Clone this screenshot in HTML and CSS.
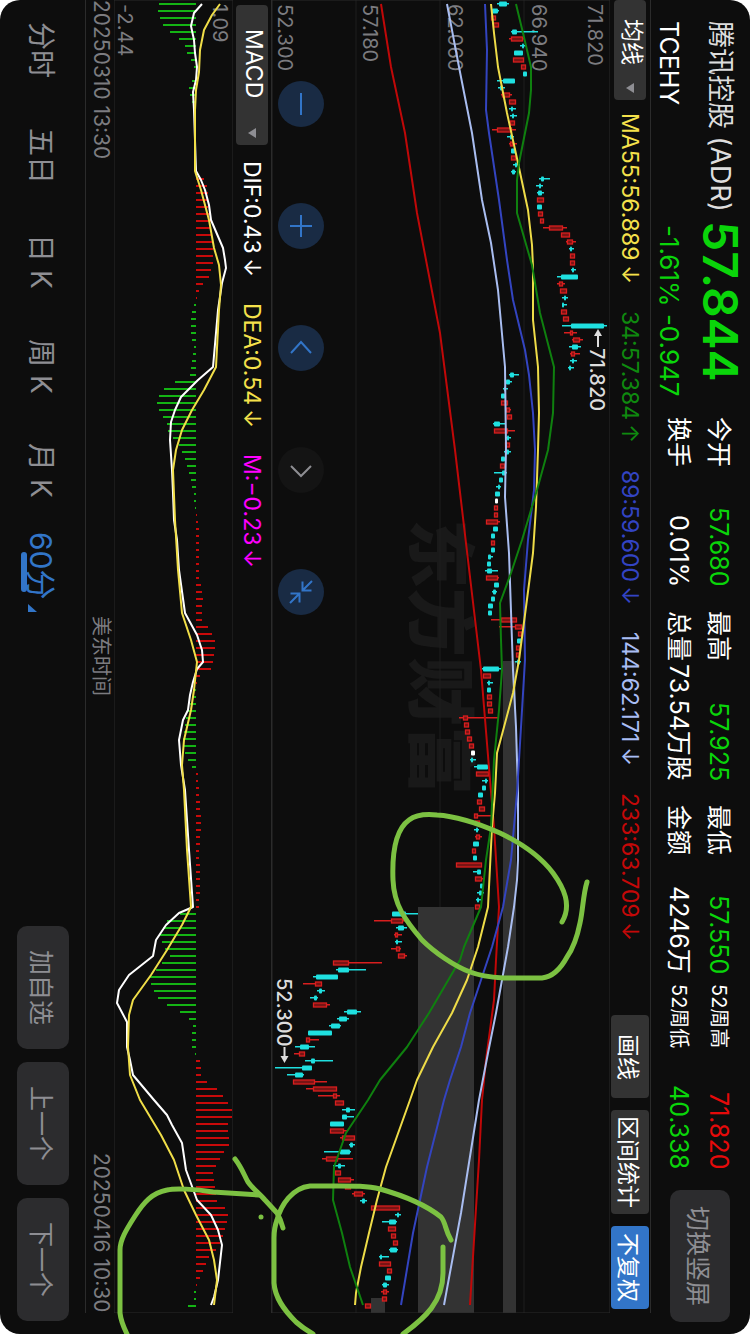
FILE: index.html
```
<!DOCTYPE html>
<html lang="zh">
<head>
  <meta charset="UTF-8">
  <meta name="viewport" content="width=device-width, initial-scale=1">
  <title>腾讯控股 (ADR)</title>
  <link rel="stylesheet" href="styles.css">
</head>
<body>

<div class="screen">
  <header class="quote">
    <div class="name">
      <h1>腾讯控股 (ADR)</h1>
      <div>TCEHY</div>
    </div>
    <div class="price">
      <strong>57.844</strong>
      <div>-1.61% -0.947</div>
    </div>
    <dl class="stats">
      <div><dt>今开</dt><dd class="down">57.680</dd></div>
      <div><dt>最高</dt><dd class="down">57.925</dd></div>
      <div><dt>最低</dt><dd class="down">57.550</dd></div>
      <div><dt class="small">52周高</dt><dd class="up">71.820</dd></div>
      <div><dt>换手</dt><dd>0.01%</dd></div>
      <div><dt>总量</dt><dd>73.54万股</dd></div>
      <div><dt>金额</dt><dd>4246万</dd></div>
      <div><dt class="small">52周低</dt><dd class="down">40.338</dd></div>
    </dl>
    <button class="soft rotate">切换竖屏</button>
  </header>

  <main class="board">
    <div class="legend averages">
      <div class="picker">
        <select aria-label="主图指标"><option>均线</option></select>
      </div>
      <span class="ma55">MA55:56.889<i>↓</i></span>
      <span class="ma34">34:57.384<i>↑</i></span>
      <span class="ma89">89:59.600<i>↓</i></span>
      <span class="ma144">144:62.171<i>↓</i></span>
      <span class="ma233">233:63.709<i>↓</i></span>
      <div class="tools">
        <button>画线</button>
        <button>区间统计</button>
        <button class="on">不复权</button>
      </div>
    </div>

    <div class="plot">
      <svg viewBox="0 0 338 1313"><g id="kline" transform="translate(338 0) rotate(90)"></g></svg>
      <div class="controls">
        <button aria-label="缩小"><svg viewBox="0 0 46 46"><path d="M23 12V34"/></svg></button>
        <button aria-label="放大"><svg viewBox="0 0 46 46"><path d="M12 23H34M23 12V34"/></svg></button>
        <button aria-label="向左"><svg viewBox="0 0 46 46"><path d="M13 28L23 17L33 28"/></svg></button>
        <button aria-label="向右" class="off"><svg viewBox="0 0 46 46"><path d="M13 19L23 29L33 19"/></svg></button>
        <button aria-label="退出全屏"><svg viewBox="0 0 46 46"><path d="M34 12L24.500 21.500M24.500 12.500V21.500H33.500M12 34L21.500 24.500M21.500 33.500V24.500H12.500"/></svg></button>
      </div>
    </div>

    <div class="legend macd">
      <div class="picker wide">
        <select aria-label="副图指标"><option>MACD</option></select>
      </div>
      <span class="dif">DIF:0.43<i>↓</i></span>
      <span class="dea">DEA:0.54<i>↓</i></span>
      <span class="hist">M:−0.23<i>↓</i></span>
    </div>

    <div class="plot">
      <svg viewBox="0 0 119 1313"><g id="macd" transform="translate(119 0) rotate(90)"></g></svg>
    </div>

    <div class="dates">
      <time>20250310 13:30</time>
      <span>美东时间</span>
      <time>20250416 10:30</time>
    </div>
  </main>

  <footer class="bar">
    <nav class="tabs">
      <a href="#">分时</a>
      <a href="#">五日</a>
      <a href="#">日 K</a>
      <a href="#">周 K</a>
      <a href="#">月 K</a>
      <a href="#" class="active">60分</a>
    </nav>
    <div class="actions">
      <button class="soft">加自选</button>
      <button class="soft">上一个</button>
      <button class="soft">下一个</button>
    </div>
  </footer>

  <svg class="ink" viewBox="0 0 750 1334">
    <g transform="translate(750 0) rotate(90)">
      <path d="M882 163C895 167 910 167 923 170C938 173 950 178 957 183C970 190 977 198 978 208V247C977 262 975 272 972 280C966 296 952 316 940 328C920 345 905 356 880 357C855 358 830 355 820 341C814 333 814 322 815 313C816 295 822 275 833 250C845 225 857 209 873 197C888 186 905 178 922 188"/>
      <path d="M1240 299C1230 305 1223 304 1217 309C1205 324 1196 345 1189 370C1185 385 1186 400 1186 440C1188 458 1205 469 1220 473Q1228 476 1238 476H1283C1298 475 1310 466 1322 454Q1329 446 1334 437M1334 347C1318 325 1302 307 1273 307H1247"/>
      <path d="M1195 491L1192 537C1189 555 1188 575 1190 583C1193 598 1202 606 1216 615C1230 624 1240 630 1250 630H1313C1322 629 1328 626 1334 623"/>
      <path d="M1159 515C1168 508 1175 506 1182 502C1189 497 1193 491 1200 485L1213 473Q1220 469 1228 467"/>
      <circle cx="1217" cy="489" r="2.500"/>
    </g>
  </svg>
</div>

<script src="chart.js"></script>
</body>
</html>
```
FILE: styles.css
```
* {
  box-sizing: border-box;
}
body {
  margin: 0;
  background: #fff;
  color: #fff;
  font-family: Inter, "Noto Sans CJK SC", sans-serif;
  font-size: 24px;
}
/* landscape page on a portrait window: lines run down, rows stack right to left */
.screen {
  writing-mode: vertical-rl;
  text-orientation: sideways;
  position: relative;
  width: 100%;
  height: 100vh;
  overflow: hidden;
  background: #0d0d0d;
  border-radius: 20px;
}
button, select {
  margin: 0;
  border: none;
  color: inherit;
  font: inherit;
  writing-mode: inherit;
  text-orientation: inherit;
  cursor: pointer;
}
svg {
  writing-mode: horizontal-tb;
}
.soft {
  inline-size: 123px;
  block-size: 52px;
  padding: 0;
  border-radius: 10px;
  background: #2c2c2e;
  color: #8e8e93;
  font-size: 25px;
}

/* quote header */
.quote {
  display: flex;
  align-items: flex-start;
  block-size: 99px;
  padding-inline: 21px 12px;
  white-space: nowrap;
}
.name {
  inline-size: 200px;
  padding-block-start: 12px;
  line-height: 36px;
}
.name h1 {
  margin: 0;
  margin-block-end: 16px;
  color: #ddd;
  font-size: 27px;
  font-weight: 400;
}
.name div {
  line-height: 34px;
  font-size: 25px;
}
.price {
  inline-size: 196px;
  color: #0ad50a;
}
.price div {
  padding-inline-start: 4px;
  line-height: 34px;
  font-size: 26px;
}
.price strong {
  display: block;
  padding-block: 5px 9px;
  line-height: 50px;
  font-size: 48px;
  font-weight: 600;
}
.stats {
  flex: 1;
  display: grid;
  grid-template-columns: 170fr 170fr 169fr 171fr;
  column-gap: 24px;
  margin: 0;
  margin-block-start: 11px;
  margin-inline-end: 21px;
  line-height: 40px;
  font-size: 25px;
}
.stats div {
  display: flex;
  justify-content: space-between;
}
.stats div:nth-child(4n) {
  margin-inline-start: -14px;
}
.stats dd {
  margin: 0;
}
.stats .small {
  font-size: 20px;
}
.up {
  color: #e60a0a;
}
.down {
  color: #0ad50a;
}
.rotate {
  inline-size: 132px;
  block-size: 60px;
  margin-block-start: 20px;
}

/* charts */
.board {
  margin-inline-end: 21px;
}
.legend {
  display: flex;
  align-items: center;
  border-block-start: 1px solid #2b2b2b;
  white-space: nowrap;
  font-size: 23px;
}
.legend i {
  margin-inline-start: 4px;
  font-style: normal;
}
.averages {
  gap: 27px;
  block-size: 41px;
}
.macd {
  gap: 26px;
  block-size: 39px;
  padding-inline-start: 5px;
}
.picker {
  flex: none;
  position: relative;
  inline-size: 100px;
  block-size: 32px;
  margin-inline-end: -14px;
}
.picker::after {
  content: "";
  position: absolute;
  inset-block-start: 12px;
  inset-inline-end: 7px;
  border: 5px solid transparent;
  border-block-start: 8px solid #8e8e93;
  border-block-end: none;
}
.picker select {
  appearance: none;
  inline-size: 100%;
  block-size: 100%;
  padding: 0;
  padding-inline: 19px;
  border-radius: 4px;
  background: #333;
}
.picker.wide {
  inline-size: 140px;
  margin-inline-end: -10px;
}
.picker.wide select {
  padding-inline: 24px;
}
.ma55, .dea { color: #f5e14b; }
.ma34 { color: #0f8a0f; }
.ma89 { color: #3344c4; }
.ma144 { color: #a9bdf5; }
.ma233 { color: #c40808; }
.hist { color: #f0f; }
.tools {
  display: flex;
  gap: 12px;
  margin-inline: auto 4px;
}
.tools button {
  min-inline-size: 83px;
  block-size: 38px;
  padding: 0;
  padding-inline: 6px;
  border-radius: 4px;
  background: #333;
}
.tools .on {
  background: #3275c8;
}
.plot {
  position: relative;
}
.plot > svg {
  display: block;
  height: 100%;
}
.grid {
  fill: none;
  stroke: #2b2b2b;
}
.grid.faint {
  stroke: #1f1f1f;
}
.gap {
  fill: #333;
}
.brand {
  fill: #191919;
  font-size: 69px;
  font-weight: 900;
}
.tick {
  fill: #7c7c80;
  font-size: 20px;
}
.mark {
  fill: #ddd;
  font-size: 20px;
  font-weight: 500;
}
.mark-line {
  stroke: #ddd;
  stroke-width: 2;
}
.line {
  fill: none;
  stroke-width: 2;
  stroke-linejoin: round;
}
.controls {
  position: absolute;
  inset-inline-start: 81px;
  inset-block-end: 6px;
  display: flex;
  gap: 76px;
}
.controls button {
  width: 46px;
  height: 46px;
  padding: 0;
  border-radius: 50%;
  background: #192b44;
  color: #3275c8;
}
.controls .off {
  background: #141414;
  color: #8e8e93;
}
.controls svg {
  display: block;
  width: 46px;
  fill: none;
  stroke: currentColor;
  stroke-width: 2;
}
.dates {
  display: flex;
  justify-content: space-between;
  block-size: 29px;
  border-block-end: 1px solid #2b2b2b;
  color: #7c7c80;
  line-height: 26px;
  font-size: 20px;
}
.dates time {
  font-size: 21px;
}

/* bottom bar */
.bar {
  display: flex;
  justify-content: space-between;
  padding-block: 16px;
  padding-inline: 22px 13px;
}
.tabs {
  display: flex;
  gap: 50px;
  block-size: 52px;
  line-height: 56px;
  font-size: 28px;
}
.tabs a {
  position: relative;
  color: #8e8e93;
  text-decoration: none;
  white-space: nowrap;
}
.tabs .active {
  margin-inline-start: -16px;
  color: #3275c8;
  font-size: 30px;
}
.active::before {
  content: "";
  position: absolute;
  inset-inline-start: 20px;
  inset-block-end: 4px;
  inline-size: 40px;
  block-size: 6px;
  border-radius: 3px;
  background: #3275c8;
}
.active::after {
  content: "";
  position: absolute;
  inset-inline-end: -12px;
  inset-block-end: 11px;
  border-inline-start: 8px solid transparent;
  border-block-end: 9px solid #3275c8;
}
.actions {
  display: flex;
  gap: 13px;
}

/* hand-drawn marks over the page */
.ink {
  position: absolute;
  top: 0;
  left: 0;
  width: 100%;
  height: 100%;
  pointer-events: none;
  fill: none;
  stroke: #7cc142;
  stroke-width: 5;
  stroke-linecap: round;
  stroke-linejoin: round;
}
.ink circle {
  fill: #7cc142;
  stroke: none;
}
```
FILE: chart.js
```
const STEP = 7;
const RED = "#d81e1e";
const CYAN = "#1fe0e0";

// each candle: colour, low, high, body low, body high (levels 272..610)
const candles = `
c 497 509 499 507|c 491 499 492 498|r 491 496|r 493 499|c 511 538 512 517|r 509 524 511 523|c 520 526 522 524|c 514 523|r 513 524|r 521 526
c 523 527|c 497 515 503 515|c 498 505 500 503|r 501 512 502 510|r 509 516|c 509 516 511 513|c 510 517 512 514|r 510 515|r 492 516 497 512|c 507 514 510 512
r 509 517 511 513|c 511 516|r 511 516|c 513 520 515 517|c 511 516 512 515|c 539 550 541 544|c 536 543 539 541|c 537 544 538 542|r 537 544|c 537 542
r 538 543|r 540 544|r 543 567 549 563|r 561 570|r 566 576 567 573|c 569 574 570 572|r 570 575|r 570 575|c 571 576 572 574|c 557 578 561 578
r 557 565 559 563|r 560 567|c 562 568 564 566|c 562 567 562 564|r 561 567|r 563 569|c 562 607 571 604|r 564 577 570 573|r 572 583 573 580|c 569 581 572 578
r 570 580 571 575|c 570 577 572 574|c 568 574 569 571|c 509 519 510 514|c 505 512 506 510|c 503 508 504 506|c 501 505|r 501 508|r 505 511 506 510|r 507 512
c 493 505 494 500|r 494 515 494 508|c 505 511 507 509|r 505 510|c 504 511 505 509|c 501 505|r 500 505|c 494 507 502 506|c 499 503|c 496 501 498 500
c 495 500|w 495 498|r 494 498|r 494 498|r 486 500 486 498|c 493 498|c 491 495|r 491 495|c 491 495|c 488 493 488 491
c 487 491|c 485 498 487 492|r 486 499 486 498|c 494 499|c 492 497 493 496|c 491 495|c 488 493|c 488 492|r 491 517 501 517|r 499 522 515 522
r 518 522|c 517 522|r 516 520|r 516 520|c 515 521 517 520|c 482 502 483 499|r 483 491|c 487 493 488 490|c 487 491|r 487 492
r 487 492|r 488 493|r 459 499 463 468|r 464 469|r 465 470|r 467 472|r 469 474|w 471 475|c 470 476 471 473|c 474 489 477 488
r 476 489|c 482 488 485 487|c 482 486|c 478 483|r 477 482|r 479 485|r 474 491 474 478|r 475 480|c 474 479 476 478|r 475 482 476 480
c 473 479|r 472 476|c 473 477|r 456 482|c 473 481 477 481|r 475 484 475 482|c 480 483|c 477 484 479 482|c 476 482 477 479|r 475 480
c 392 418 392 406|r 374 407 391 403|c 396 407 398 404|r 394 402 395 398|c 395 402 396 398|r 391 401 396 400|r 398 407 398 405|r 333 382 333 349|c 336 366 338 349|c 313 338 316 338
r 303 322 315 322|c 317 325 319 322|c 310 318 314 317|r 313 330 313 327|c 344 361 347 357|c 337 349 339 347|c 329 341 331 340|c 308 332|r 306 319 306 310|c 295 315 300 309
r 294 305 299 305|c 305 333 311 315|c 275 312 302 312|c 287 304 295 303|r 293 327 293 315|r 306 337 313 337|r 318 340 333 337|r 335 344|c 342 355 346 350|c 342 354 342 347
c 330 344|r 330 347 330 344|r 340 355 342 355|c 349 355 350 353|c 324 351 340 350|r 322 353 326 338|c 333 345 338 341|r 335 341|r 338 354 338 351|r 345 351
r 352 365 354 363|c 360 367 362 365|r 371 400|c 395 401 397 399|c 382 397 389 396|r 388 396|r 391 396|r 393 398|c 389 398 390 397|c 379 389 380 382
r 379 391|r 387 392|c 385 391|c 382 389 383 387|r 381 389 383 387|r 382 387|r 365 371`
  .trim().split(/[|\n]/).map(c => c.trim().split(" ").map((v, i) => i ? +v : v));

// time level pairs
const averages = [
  ["#c00808", "4 381 67 391 133 405 213 417 333 440 450 455 560 468 670 481 780 490 827 494 907 499 960 496 1000 494 1060 486 1100 482 1160 479 1305 470"],
  ["#a9bdf0", "4 447 67 459 133 472 200 482 243 491 290 498 367 505 447 506 497 505 553 509 670 513 727 516 793 518 860 518 880 517 907 514 947 508 1013 496 1053 488 1100 479 1213 461 1305 444"],
  ["#3344c0", "4 485 50 487 110 486 133 489 200 499 260 507 300 513 350 525 375 529 413 533 450 535 490 534 540 528 590 524 660 525 727 521 793 517 860 511 907 503 947 492 980 481 1013 470 1047 461 1080 450 1100 444 1167 427 1233 413 1305 401"],
  ["#eedc48", "4 491 33 494 67 498 113 507 163 518 210 528 245 532 267 533 320 533 367 538 413 539 450 538 507 536 553 533 607 526 660 519 693 513 727 504 753 497 793 495 827 492 907 488 947 478 980 467 1013 452 1047 433 1080 417 1100 410 1167 386 1200 377 1233 369 1267 361 1293 356 1305 355"],
  ["#0f800f", "4 516 33 523 67 531 90 531 113 529 163 519 180 517 213 517 265 532 313 540 367 554 413 553 450 548 490 537 540 522 573 511 603 500 640 501 670 502 710 499 760 494 827 491 860 486 907 481 947 464 960 460 1013 429 1047 407 1080 380 1100 368 1133 346 1167 334 1200 333 1233 342 1267 350 1305 363"]
];

const dif = "4 201 13 193 26 190 40 193 53 194 67 196 80 195 92 192 110 193 171 195 180 200 190 204 205 208 220 210 248 222 260 224 268 225 283 221 310 217 367 212 380 197 397 180 410 174 422 170 440 169 470 171 493 172 520 173 540 176 570 178 613 184 635 196 650 201 662 202 669 196 682 192 695 189 710 187 720 182 740 178 765 180 790 184 850 188 907 192 913 178 925 165 940 155 956 152 975 128 990 118 1003 116 1022 126 1047 126 1060 129 1075 132 1100 153 1115 166 1125 171 1143 181 1170 185 1200 196 1215 210 1230 217 1245 221 1280 217 1297 213 1305 210";
const dea = "4 219 15 211 30 203 50 199 72 198 90 195 110 194 171 194 190 200 220 208 248 213 265 218 285 220 310 218 367 215 390 203 410 191 430 181 450 175 470 172 520 174 570 177 613 181 640 190 662 196 690 193 710 190 740 183 765 181 790 183 850 186 907 190 925 181 950 166 975 150 1000 132 1015 128 1047 127 1075 129 1100 139 1135 160 1160 173 1190 183 1215 195 1240 208 1260 213 1280 216 1305 213";

const ZERO = 195;
const bars = [
  158, 157, 159, 162, 169, 178, 184, 186, 190, 193, 196, 191, 188, 189, 191, 194, 194, 194, 195, 195, 195, 195, 195, 195, 195,
  203, 206, 207, 206, 207, 209, 210, 209, 211, 211, 212, 212, 212, 210, 208, 202, 198, 196, 193, 191, 190, 190, 190, 191, 193,
  192, 191, 190, 189, 174, 163, 158, 156, 158, 162, 166, 167, 172, 178, 181, 184, 186, 188, 190, 191, 193, 193, 194, 196, 197,
  198, 198, 198, 198, 198, 198, 198, 198, 200, 201, 202, 201, 201, 201, 207, 211, 214, 214, 213, 212, 210, 199, 196, 193, 191,
  189, 187, 185, 184, 183, 182, 182, 184, 187, 191, 197, 197, 198, 198, 199, 199, 200, 200, 200, 199, 199, 198, 198, 199, 199,
  199, 199, 199, 198, 198, 179, 166, 162, 158, 161, 164, 169, 161, 155, 149, 150, 153, 157, 166, 179, 188, 192, 191, 191, 191,
  194, 199, 200, 200, 206, 216, 222, 227, 231, 231, 227, 227, 228, 228, 223, 219, 215, 212, 213, 214, 215, 216, 224, 227, 226,
  224, 222, 219, 215, 208, 205, 202, 199, 196, 193, 193, 187
];

const rect = (x, y, w, h, extra) => `<rect x="${x}" y="${y}" width="${w}" height="${h}" ${extra}/>`;

function polyline(pairs, top, color) {
  const n = pairs.split(" ").map(Number);
  let points = "";
  for (let i = 0; i < n.length; i += 2) {
    points += `${n[i]},${top - n[i + 1]} `;
  }
  return `<polyline class="line" points="${points}" stroke="${color}"/>`;
}

function drawKline() {
  const top = 610;
  let out = `<text class="brand" x="519" y="195">东方财富</text>`;
  out += `<path class="grid faint" d="M0 86H1313M0 170H1313M0 254H1313"/>`;
  out += rect(661, 94, 652, 13, 'class="gap"');
  out += rect(907, 136, 406, 56, 'class="gap"');
  out += rect(1298, 225, 15, 14, 'class="gap"');
  out += `<path class="grid" d="M0 0V338M0 338H1313V0H0"/>`;

  ["71.820", "66.940", "62.060", "57.180", "52.300"].forEach((label, i) => {
    out += `<text class="tick" x="4" y="${[22, 78, 162, 247, 332][i]}">${label}</text>`;
  });

  candles.forEach(([kind, low, high, from = low, to = high], i) => {
    const x = 4 + i * STEP;
    const color = kind === "r" ? RED : kind === "c" ? CYAN : "#fff";
    out += rect(x - 1, top - high, 1.5, high - low, `fill="${color}"`);
    if (kind === "r") {
      out += rect(x - 2, top - to + 0.5, 4, Math.max(to - from - 1, 2), `fill="#7a1414" stroke="${color}" stroke-width="1.300"`);
    } else {
      out += rect(x - 2.5, top - to, 5, to - from, `rx="1" fill="${color}"`);
    }
  });

  averages.forEach(([color, pairs]) => out += polyline(pairs, top, color));

  out += `<path class="mark-line" d="M334 12H347"/><path fill="#ddd" d="M329 12L336 8V16Z"/>`;
  out += `<text class="mark" x="348" y="20">71.820</text>`;
  out += `<text class="mark" x="978" y="333">52.300</text>`;
  out += `<path class="mark-line" d="M1047 325.500H1058"/><path fill="#ddd" d="M1063 325.500L1056 321.500V329.500Z"/>`;
  document.getElementById("kline").innerHTML = out;
}

function drawMacd() {
  const top = 232;
  let out = `<path class="grid" d="M0 0V119M0 0H1313V119H0"/>`;
  out += `<text class="tick" x="4" y="20">1.09</text>`;
  out += `<text class="tick" x="4" y="115">-2.44</text>`;
  bars.forEach((v, i) => {
    const up = v > ZERO;
    out += rect(3 + i * STEP, top - Math.max(v, ZERO), 2, Math.abs(v - ZERO), `fill="${up ? "#c80a0a" : "#14b414"}"`);
  });
  out += polyline(dif, top, "#fff") + polyline(dea, top, "#f0de48");
  document.getElementById("macd").innerHTML = out;
}

drawKline();
drawMacd();
```
